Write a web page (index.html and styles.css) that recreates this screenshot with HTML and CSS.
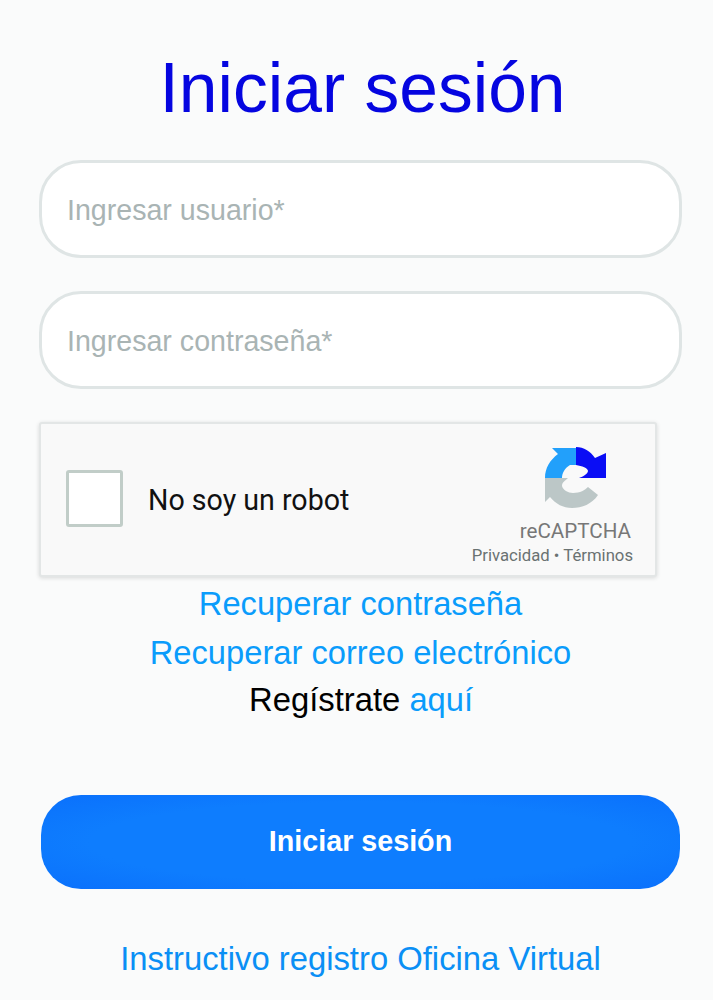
FILE: index.html
```html
<!DOCTYPE html>
<html lang="es">
<head>
<meta charset="utf-8">
<title>Iniciar sesión</title>
<link rel="stylesheet" href="styles.css">
</head>
<body>
<main class="page">
  <h1 class="title">Iniciar sesión</h1>
  <form class="form">
    <input class="field" type="text" placeholder="Ingresar usuario*">
    <input class="field" type="password" placeholder="Ingresar contraseña*">
    <div class="captcha">
      <span class="check"></span>
      <span class="robot">No soy un robot</span>
      <div class="brand">
        <svg class="logo" viewBox="0 0 64 64" width="64" height="64" aria-hidden="true">
          <path fill="#22a0fb" d="M1 32C1 22 6 14 14 8L8 2H32V19H26C21 22 18 27 18 32Z"/>
          <path fill="#0a0df5" d="M32 1C40 1 46 5 51 12L62 7V32H35C38 31 44 28 44 25C44 22 38 20 32 19Z"/>
          <path fill="#bcc7c7" d="M1 32H24C21 35 18 36 18 40C19 44 24 47 29 47C36 47 41 44 44 41L54 49C48 58 38 62 28 62C19 62 12 58 6 51L1 56Z"/>
        </svg>
        <span class="brand-name">reCAPTCHA</span>
        <span class="brand-links">Privacidad • Términos</span>
      </div>
    </div>
    <div class="links">
      <a class="link" href="#">Recuperar contraseña</a>
      <a class="link" href="#">Recuperar correo electrónico</a>
      <p class="register">Regístrate <a class="link-inline" href="#">aquí</a></p>
    </div>
    <button class="submit" type="button">Iniciar sesión</button>
    <a class="guide" href="#">Instructivo registro Oficina Virtual</a>
  </form>
</main>
</body>
</html>
```
FILE: styles.css
```css
* { box-sizing: border-box; }
html, body { margin: 0; padding: 0; }
body {
  background: #fafbfb;
  font-family: "Liberation Sans", Arial, sans-serif;
  height: 1000px;
  overflow: hidden;
}
.page {
  display: flex;
  flex-direction: column;
  padding: 48px 31px 0 39px;
}
.title {
  margin: 0;
  color: #0505e0;
  font-size: 69.6px;
  font-weight: 400;
  line-height: 80px;
  text-align: center;
  padding-left: 4px;
}
.form {
  display: flex;
  flex-direction: column;
  margin-top: 32px;
}
.field {
  width: 100%;
  height: 98px;
  margin-bottom: 33px;
  padding: 2px 25px 0;
  border: 3px solid #dfe5e5;
  border-radius: 42px;
  background: #fff;
  font-family: inherit;
  font-size: 28.6px;
  color: #333;
  outline: none;
}
.field::placeholder { color: #a9b4b4; opacity: 1; }
.captcha {
  display: flex;
  align-items: center;
  width: 618px;
  height: 155px;
  padding: 0 22px 0 25px;
  border: 2px solid #e3e6e6;
  border-radius: 3px;
  background: #f9f9f9;
  box-shadow: 0 1px 4px rgba(0, 0, 0, .14);
}
.check {
  flex: none;
  width: 57px;
  height: 57px;
  margin-bottom: 2px;
  border: 3px solid #c1cdc8;
  border-radius: 3px;
  background: #fff;
}
.robot {
  margin-left: 25px;
  font-family: Roboto, "Liberation Sans", sans-serif;
  font-size: 28.6px;
  color: #111;
}
.brand {
  display: flex;
  flex-direction: column;
  align-items: flex-end;
  align-self: flex-start;
  margin: 22px 0 0 auto;
  color: #777;
}
.logo {
  display: block;
  margin-right: 25px;
  filter: blur(.5px);
}
.brand-name {
  margin: 9px 2px 0 0;
  font-family: Roboto, "Liberation Sans", sans-serif;
  font-size: 20.6px;
  line-height: 24px;
}
.brand-links {
  margin-top: 3px;
  font-family: Roboto, "Liberation Sans", sans-serif;
  font-size: 16.7px;
  line-height: 20px;
  white-space: nowrap;
  color: #6a7272;
}
.links {
  display: flex;
  flex-direction: column;
  align-items: center;
  padding-top: 2px;
}
.link, .link-inline {
  color: #0a9cfb;
  font-size: 32.7px;
  line-height: 49px;
  text-decoration: none;
}
.register {
  margin: 0;
  padding-left: 1px;
  color: #000;
  font-size: 32.8px;
  line-height: 45px;
}
.link-inline { line-height: 45px; }
.submit {
  width: 639px;
  height: 94px;
  margin: 73px 0 0 2px;
  padding-bottom: 2px;
  border: 0;
  border-radius: 40px;
  background: radial-gradient(ellipse at center, #0e7dfe 60%, #0a70fc 100%);
  color: #fff;
  font-family: inherit;
  font-size: 28.7px;
  font-weight: 700;
}
.guide {
  margin-top: 45px;
  color: #0a8ff5;
  font-size: 32.8px;
  line-height: 49px;
  text-align: center;
  text-decoration: none;
}
```
